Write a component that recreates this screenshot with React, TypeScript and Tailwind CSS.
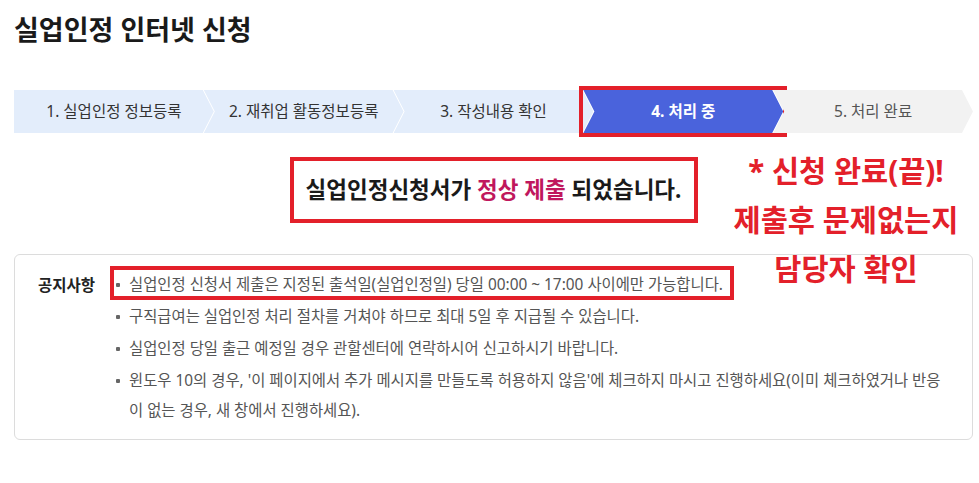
import React from 'react'

const steps = [
  { label: '1. 실업인정 정보등록', bg: 'bg-[#e3edfb]', text: 'text-[#333333] font-normal', first: true },
  { label: '2. 재취업 활동정보등록', bg: 'bg-[#e3edfb]', text: 'text-[#333333] font-normal' },
  { label: '3. 작성내용 확인', bg: 'bg-[#e3edfb]', text: 'text-[#333333] font-normal' },
  { label: '4. 처리 중', bg: 'bg-[#4a63dc]', text: 'text-white font-bold', active: true },
  { label: '5. 처리 완료', bg: 'bg-[#f2f2f2]', text: 'text-[#555555] font-normal' },
]

const notices = [
  '실업인정 신청서 제출은 지정된 출석일(실업인정일) 당일 00:00 ~ 17:00 사이에만 가능합니다.',
  '구직급여는 실업인정 처리 절차를 거쳐야 하므로 최대 5일 후 지급될 수 있습니다.',
  '실업인정 당일 출근 예정일 경우 관할센터에 연락하시어 신고하시기 바랍니다.',
  "윈도우 10의 경우, '이 페이지에서 추가 메시지를 만들도록 허용하지 않음'에 체크하지 마시고 진행하세요(이미 체크하였거나 반응이 없는 경우, 새 창에서 진행하세요).",
]

function StepBar() {
  return (
    <div className="mt-[42px] flex h-[43px] w-[959px]">
      {steps.map((s, i) => (
        <div key={i} className={`relative h-full flex-1 ${s.first ? '' : '-ml-[10px]'}`}>
          <div
            className={`flex h-full items-center justify-center whitespace-nowrap text-[15.5px] ${s.bg} ${s.text} ${
              s.first
                ? '[clip-path:polygon(0_0,calc(100%_-_11px)_0,100%_50%,calc(100%_-_11px)_100%,0_100%)]'
                : '[clip-path:polygon(0_0,calc(100%_-_11px)_0,100%_50%,calc(100%_-_11px)_100%,0_100%,11px_50%)]'
            }`}
          >
            {s.label}
          </div>
          {/* highlight box drawn over the active step */}
          {s.active && (
            <div className="pointer-events-none absolute -bottom-1 -left-1 -right-1 -top-1 border-4 border-[#e3202a]" />
          )}
        </div>
      ))}
    </div>
  )
}

export default function App() {
  return (
    <div className="relative min-h-[483px] bg-white font-['Noto_Sans','Noto_Sans_CJK_KR',sans-serif] text-[#222]">
      <div className="ml-[14px] w-[959px] pt-[12px]">
        <h1 className="text-[27px] font-bold leading-[36px] text-[#1a1a1a]">실업인정 인터넷 신청</h1>

        <StepBar />

        {/* Result message */}
        <div className="mt-[24px] flex justify-center">
          <div className="flex h-[66px] w-[408px] items-center justify-center border-4 border-[#e3202a]">
            <p className="whitespace-nowrap text-[22.5px] font-bold text-[#1a1a1a]">
              실업인정신청서가 <span className="text-[#c0175d]">정상 제출</span> 되었습니다.
            </p>
          </div>
        </div>

        {/* Notice box */}
        <div className="mt-[31px] flex rounded-md border border-[#dcdcdc] pb-[13px] pl-[23px] pt-[15px]">
          <div className="w-[79px] shrink-0 text-[15.5px] font-bold leading-[30px] text-[#222]">공지사항</div>
          <ul className="w-[829px] space-y-[2px] text-[15.4px] leading-[30px] text-[#555]">
            {notices.map((n, i) => (
              <li key={i} className="flex">
                <span className="relative flex">
                  <span className="mr-[9px] ml-[-1px] mt-[13px] h-[4px] w-[4px] shrink-0 rounded-[1px] bg-[#666]" />
                  <span>{n}</span>
                  {i === 0 && (
                    <span className="pointer-events-none absolute -left-[7px] -right-[11px] -top-1 bottom-0 border-4 border-[#e3202a]" />
                  )}
                </span>
              </li>
            ))}
          </ul>
        </div>
      </div>

      {/* Red annotation */}
      <div className="absolute left-[720px] top-[146px] w-[252px] text-center text-[29.5px] font-bold leading-[49px] text-[#e3202a]">
        <p>* 신청 완료(끝)!</p>
        <p>제출후 문제없는지</p>
        <p>담당자 확인</p>
      </div>
    </div>
  )
}
